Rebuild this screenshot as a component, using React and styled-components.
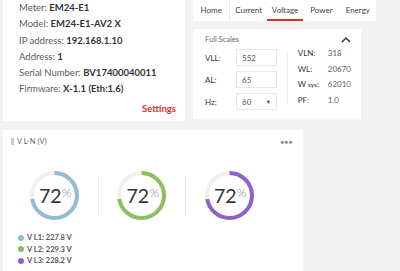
import React from "react";
import styled, { createGlobalStyle } from "styled-components";

const GlobalStyle = createGlobalStyle`
  html, body { margin: 0; padding: 0; }
  body {
    background: #f2f2f2;
    font-family: Lato, "Noto Sans", "Liberation Sans", sans-serif;
    width: 400px;
    height: 271px;
    overflow: hidden;
  }
  * { box-sizing: border-box; }
`;

const Page = styled.div`
  display: flex;
  flex-direction: column;
  padding-left: 3px;
`;

const TopRow = styled.div`
  display: flex;
  gap: 8px;
  align-items: flex-start;
`;

const InfoCard = styled.div`
  width: 182px;
  height: 121px;
  background: #fff;
  padding: 0 9px 0 16px;
`;

const InfoLine = styled.div`
  font-size: 9.5px;
  line-height: 16.3px;
  color: #5a5a5a;
  white-space: nowrap;
  b { font-weight: 700; color: #333; }
`;

const SettingsLink = styled.div`
  margin-top: 3px;
  text-align: right;
  font-size: 9.5px;
  line-height: 16px;
  font-weight: 700;
  color: #d2322d;
`;

const RightCol = styled.div`
  width: 183px;
  display: flex;
  flex-direction: column;
  gap: 8px;
`;

const TabBar = styled.div`
  display: flex;
  height: 21px;
  background: #fff;
`;

const Tab = styled.div`
  flex: 1;
  position: relative;
  display: flex;
  align-items: center;
  justify-content: center;
  font-size: 8px;
  color: #444;
  padding-bottom: 2px;
  border-right: ${(p) => (p.$divider ? "1px solid #ececec" : "none")};
  &::after {
    content: "";
    display: ${(p) => (p.$active ? "block" : "none")};
    position: absolute;
    left: 0;
    right: 0;
    bottom: 0;
    height: 2px;
    background: #d2322d;
  }
`;

const ScalesCard = styled.div`
  width: 168px;
  height: 90px;
  background: #fff;
  padding: 5px 10px 0 12px;
`;

const ScalesHeader = styled.div`
  display: flex;
  justify-content: space-between;
  align-items: center;
  height: 10px;
  font-size: 7.5px;
  color: #666;
`;

const ScalesBody = styled.div`
  display: flex;
  margin-top: 5px;
`;

const FieldCol = styled.div`
  display: flex;
  flex-direction: column;
  gap: 5px;
`;

const FieldRow = styled.div`
  display: flex;
  align-items: center;
`;

const FieldLabel = styled.div`
  width: 31px;
  font-size: 8px;
  color: #333;
`;

const InputBox = styled.div`
  width: 41px;
  height: 17px;
  border: 1px solid #e8e8e8;
  display: flex;
  align-items: center;
  justify-content: space-between;
  padding: 0 5px 0 5px;
  font-size: 8px;
  color: #555;
`;

const Caret = styled.span`
  font-size: 5.5px;
  color: #444;
`;

const VRule = styled.div`
  width: 1px;
  height: 53px;
  background: #ececec;
  margin: 3px 10px 0 10px;
`;

const StatCol = styled.div`
  display: flex;
  flex-direction: column;
  margin-top: -3px;
`;

const StatRow = styled.div`
  display: flex;
  line-height: 15.7px;
  font-size: 8px;
`;

const StatLabel = styled.div`
  width: 30px;
  color: #333;
  small { font-size: 6.5px; }
`;

const StatValue = styled.div`
  color: #666;
`;

const GaugeCard = styled.div`
  margin-top: 9px;
  width: 300px;
  height: 141px;
  background: #fff;
  padding: 6px 10px 0 8px;
`;

const CardHeader = styled.div`
  display: flex;
  align-items: center;
  height: 10px;
  font-size: 7.5px;
  color: #666;
`;

const Handle = styled.span`
  width: 3px;
  height: 7px;
  margin-right: 3px;
  background-image: radial-gradient(circle, #ccc 0.6px, transparent 0.7px);
  background-size: 1.5px 1.5px;
`;

const HeaderTitle = styled.span`
  flex: 1;
`;

const MoreDots = styled.span`
  font-size: 6px;
  letter-spacing: 0.6px;
  color: #888;
`;

const GaugeRow = styled.div`
  display: flex;
  align-items: center;
  margin-top: 25px;
`;

const GaugeCell = styled.div`
  width: 86.5px;
  display: flex;
  justify-content: center;
`;

const GaugeDivider = styled.div`
  width: 1px;
  height: 40px;
  background: #ececec;
`;

const GaugeWrap = styled.div`
  position: relative;
  width: 49px;
  height: 49px;
`;

const GaugeLabel = styled.div`
  position: absolute;
  inset: 0;
  display: flex;
  align-items: center;
  justify-content: center;
  padding-left: 2px;
`;

const GaugeNumber = styled.span`
  font-size: 19.5px;
  font-weight: 400;
  color: #333;
  line-height: 1;
`;

const GaugePercent = styled.span`
  font-size: 12.5px;
  font-weight: 300;
  color: #888;
  align-self: flex-start;
  margin-top: 14px;
`;

const Legend = styled.div`
  display: flex;
  flex-direction: column;
  margin-top: 12px;
  padding-left: 7px;
`;

const LegendItem = styled.div`
  display: flex;
  align-items: center;
  gap: 3px;
  line-height: 11.5px;
  font-size: 7.5px;
  font-weight: 700;
  color: #555;
`;

const Dot = styled.span`
  width: 6px;
  height: 6px;
  border-radius: 50%;
  background: ${(p) => p.$color};
`;

const phases = [
  { name: "V L1", value: "227.8 V", color: "#93bcd3" },
  { name: "V L2", value: "229.3 V", color: "#8dbf5e" },
  { name: "V L3", value: "228.2 V", color: "#9061ca" },
];

function Gauge({ pct, color }) {
  const r = 22.5;
  const c = 2 * Math.PI * r;
  return (
    <GaugeWrap>
      <svg width="49" height="49" viewBox="0 0 49 49">
        <circle cx="24.5" cy="24.5" r={r} fill="none" stroke="#f0f0f0" strokeWidth="4" />
        <circle
          cx="24.5"
          cy="24.5"
          r={r}
          fill="none"
          stroke={color}
          strokeWidth="4"
          strokeDasharray={`${(c * pct) / 100} ${c}`}
          transform="rotate(-90 24.5 24.5)"
        />
      </svg>
      <GaugeLabel>
        <GaugeNumber>{pct}</GaugeNumber>
        <GaugePercent>%</GaugePercent>
      </GaugeLabel>
    </GaugeWrap>
  );
}

export default function App() {
  return (
    <>
      <GlobalStyle />
      <Page>
        <TopRow>
          <InfoCard>
            <InfoLine>Meter: <b>EM24-E1</b></InfoLine>
            <InfoLine>Model: <b>EM24-E1-AV2 X</b></InfoLine>
            <InfoLine>IP address: <b>192.168.1.10</b></InfoLine>
            <InfoLine>Address: <b>1</b></InfoLine>
            <InfoLine>Serial Number: <b>BV17400040011</b></InfoLine>
            <InfoLine>Firmware: <b>X-1.1 (Eth:1.6)</b></InfoLine>
            <SettingsLink>Settings</SettingsLink>
          </InfoCard>
          <RightCol>
            <TabBar>
              <Tab $divider>Home</Tab>
              <Tab>Current</Tab>
              <Tab $active>Voltage</Tab>
              <Tab>Power</Tab>
              <Tab>Energy</Tab>
            </TabBar>
            <ScalesCard>
              <ScalesHeader>
                <span>Full Scales</span>
                <svg width="10" height="7" viewBox="0 0 10 7">
                  <path d="M1 6 L5 2 L9 6" fill="none" stroke="#333" strokeWidth="1.5" />
                </svg>
              </ScalesHeader>
              <ScalesBody>
                <FieldCol>
                  <FieldRow>
                    <FieldLabel>VLL:</FieldLabel>
                    <InputBox>552</InputBox>
                  </FieldRow>
                  <FieldRow>
                    <FieldLabel>AL:</FieldLabel>
                    <InputBox>65</InputBox>
                  </FieldRow>
                  <FieldRow>
                    <FieldLabel>Hz:</FieldLabel>
                    <InputBox>60<Caret>▼</Caret></InputBox>
                  </FieldRow>
                </FieldCol>
                <VRule />
                <StatCol>
                  <StatRow><StatLabel>VLN:</StatLabel><StatValue>318</StatValue></StatRow>
                  <StatRow><StatLabel>WL:</StatLabel><StatValue>20670</StatValue></StatRow>
                  <StatRow><StatLabel>W <small>sys</small>:</StatLabel><StatValue>62010</StatValue></StatRow>
                  <StatRow><StatLabel>PF:</StatLabel><StatValue>1.0</StatValue></StatRow>
                </StatCol>
              </ScalesBody>
            </ScalesCard>
          </RightCol>
        </TopRow>
        <GaugeCard>
          <CardHeader>
            <Handle />
            <HeaderTitle>V L-N (V)</HeaderTitle>
            <MoreDots>●●●</MoreDots>
          </CardHeader>
          <GaugeRow>
            {phases.map((p, i) => (
              <React.Fragment key={p.name}>
                {i > 0 && <GaugeDivider />}
                <GaugeCell>
                  <Gauge pct={72} color={p.color} />
                </GaugeCell>
              </React.Fragment>
            ))}
          </GaugeRow>
          <Legend>
            {phases.map((p) => (
              <LegendItem key={p.name}>
                <Dot $color={p.color} />
                {p.name}: {p.value}
              </LegendItem>
            ))}
          </Legend>
        </GaugeCard>
      </Page>
    </>
  );
}
